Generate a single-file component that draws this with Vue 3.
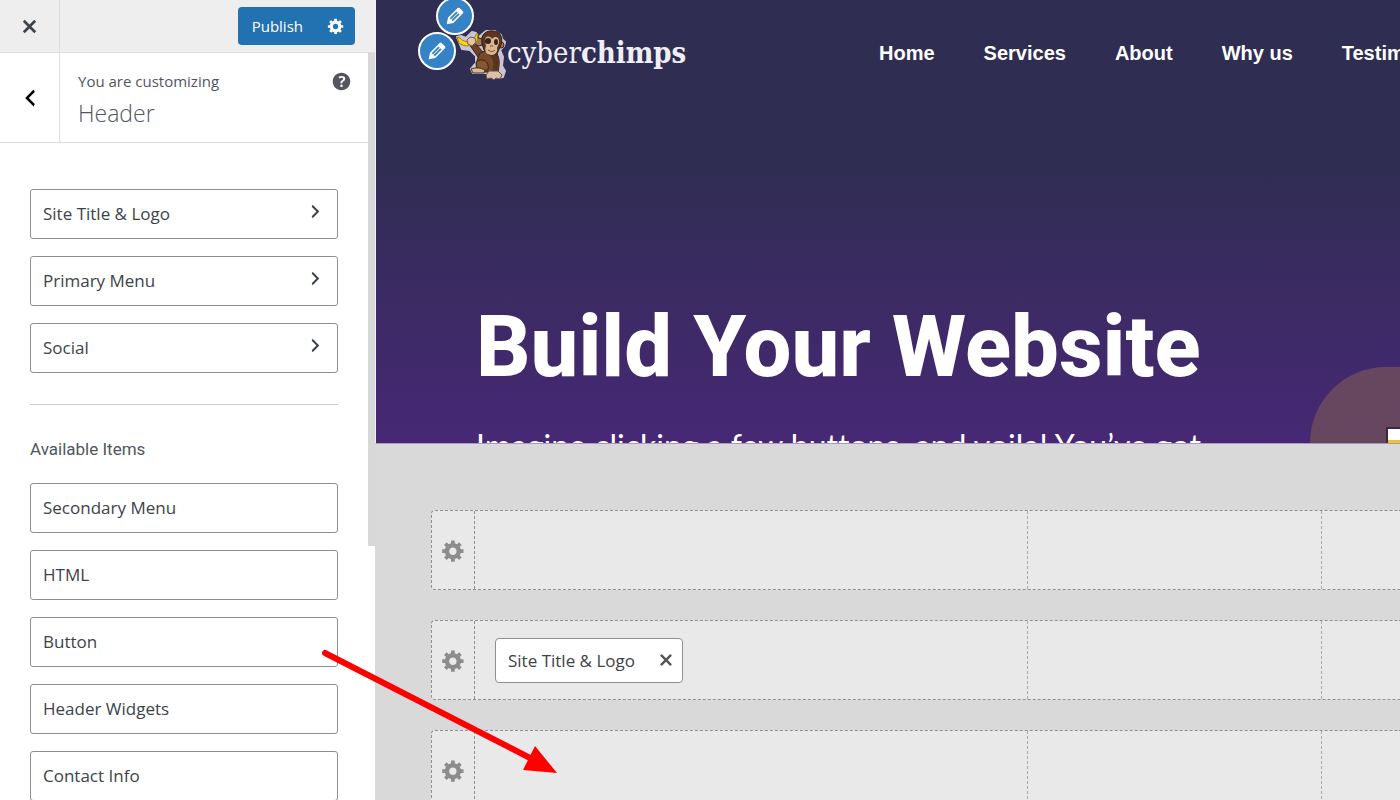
<template>
  <div class="customizer">
    <aside class="sidebar">
      <div class="topbar">
        <button class="btn-close" aria-label="Close">
          <svg viewBox="0 0 20 20" width="27" height="27"><path :d="icons.close" /></svg>
        </button>
        <div class="publish-group">
          <button class="btn-publish">Publish</button>
          <button class="btn-publish-settings" aria-label="Publish settings">
            <svg viewBox="0 0 20 20" width="18" height="18"><path :d="icons.gear" /></svg>
          </button>
        </div>
      </div>

      <div class="panel">
        <div class="panel-title">
          <button class="btn-back" aria-label="Back">
            <svg viewBox="0 0 20 20" width="24" height="24"><path :d="icons.left" /></svg>
          </button>
          <div class="panel-heading">
            <span class="panel-intro">You are customizing</span>
            <h3>Header</h3>
          </div>
          <button class="btn-help" aria-label="Help">
            <svg viewBox="0 0 20 20" width="25" height="25"><path :d="icons.help" /></svg>
          </button>
        </div>

        <div class="panel-content">
          <div class="item-list">
            <button v-for="item in usedItems" :key="item" class="item">
              <span>{{ item }}</span>
              <svg viewBox="0 0 20 20" width="19" height="19"><path :d="icons.right" /></svg>
            </button>
          </div>
          <hr />
          <h4>Available Items</h4>
          <div class="item-list">
            <button v-for="item in availableItems" :key="item" class="item">
              <span>{{ item }}</span>
            </button>
          </div>
        </div>
      </div>
      <div class="scroll-track"><div class="scroll-thumb"></div></div>
    </aside>

    <main class="main">
      <section class="preview">
        <header class="site-header">
          <a href="#" class="logo" aria-label="cyberchimps">
            <svg class="monkey" viewBox="0 0 52 52" width="52" height="52">
              <g stroke="#c9c3d6" stroke-width="2" stroke-linejoin="round" fill="#c9c3d6">
                <path d="M1 8l4-1 5 2 6-6 4 1-1 9 4 2 1-8 6-5h9l6 4 1 4 3 3-1 4-4 4 3 7-1 9 3 5-2 6-5 1-8-1-2-4H17l-2-4 5-6 0-7-6-6-8-1z" />
              </g>
              <!-- arms and body -->
              <path d="M13 15l5-2 9 10 6 2-3 8-8-5z" fill="#6b4225" stroke="#3c2416" />
              <path d="M24 24c8-4 17-3 18 3 2 5 1 11 0 16H22c-3-5-1-13 2-19z" fill="#754a2a" stroke="#3c2416" />
              <path d="M34 27c4 3 4 8 2 16h5c3-6 3-13 0-18z" fill="#5a351e" />
              <path d="M20 33c6-5 14-1 12 8l-11 1z" fill="#865633" stroke="#3c2416" />
              <path d="M15 40c5-2 10-1 14 1l-1 3H17z" fill="#d9b793" stroke="#4b3023" />
              <path d="M33 42h9l4 4-2 4-4-1-2 2-3-2-4 1-1-4z" fill="#dbc1aa" stroke="#6a4c3b" />
              <!-- head -->
              <circle cx="23" cy="13" r="4" fill="#a87952" stroke="#3c2416" />
              <circle cx="45" cy="16" r="3" fill="#a87952" stroke="#3c2416" />
              <path d="M26 15c-2-9 4-14 11-13 8 0 10 7 8 14l-4 9-8 1-5-5z" fill="#5b351f" stroke="#352015" />
              <path d="M29 11c0-5 6-4 7-1 3-4 8-2 7 4l-2 5c1 4-2 7-5 7-6 0-8-4-6-9z" fill="#dcb68c" />
              <ellipse cx="32" cy="12" rx="3" ry="3" fill="#332622" />
              <ellipse cx="40" cy="13" rx="2" ry="3" fill="#332622" />
              <path d="M34 17h3M32 21c3 2 5 2 7 0" fill="none" stroke="#7b523b" />
              <!-- banana -->
              <path d="M1 8l3 1c3 4 8 4 13 3l4-8 1 1-1 8c-5 5-13 5-18 1z" fill="#f5d51c" stroke="#a78019" />
              <path d="M11 11l3-3 5 1 1 4-4 4-4-2z" fill="#dfc6a6" stroke="#765643" />
            </svg>
            <span class="logo-text">cyber<b>chimps</b></span>
          </a>
          <button class="edit-shortcut edit-header" aria-label="Edit header">
            <svg viewBox="0 0 20 20" width="24" height="24"><path :d="icons.edit" /></svg>
          </button>
          <button class="edit-shortcut edit-logo" aria-label="Edit logo">
            <svg viewBox="0 0 20 20" width="24" height="24"><path :d="icons.edit" /></svg>
          </button>
          <nav class="site-nav">
            <a v-for="link in navLinks" :key="link" href="#">{{ link }}</a>
          </nav>
        </header>
        <div class="hero">
          <h1>Build Your Website</h1>
          <p>Imagine clicking a few buttons, and voila! You’ve got</p>
        </div>
        <div class="hero-art">
          <div class="hero-card"></div>
        </div>
      </section>

      <section class="builder">
        <div v-for="row in builderRows" :key="row.id" class="builder-row">
          <button class="row-settings" :aria-label="row.label">
            <svg viewBox="0 0 20 20" width="25" height="25"><path :d="icons.gear" /></svg>
          </button>
          <div class="drop-zone">
            <div v-for="chip in row.items" :key="chip" class="chip">
              <span>{{ chip }}</span>
              <button aria-label="Remove" @click="removeItem(row, chip)">
                <svg viewBox="0 0 20 20" width="24" height="24"><path :d="icons.close" /></svg>
              </button>
            </div>
          </div>
          <div class="drop-zone"></div>
          <div class="drop-zone"></div>
        </div>
      </section>
    </main>

    <!-- drag hint pointing from the Button item to the bottom row -->
    <svg class="drag-arrow" viewBox="0 0 240 130" width="240" height="130">
      <path d="M7 7L214 113" stroke="#ff0000" stroke-width="6" stroke-linecap="round" />
      <path d="M239 127L217 100L205 124z" fill="#ff0000" />
    </svg>
  </div>
</template>

<script setup>
import { ref } from 'vue'

const icons = {
  close: 'M14.95 6.46L11.41 10l3.54 3.54-1.41 1.41L10 11.42l-3.53 3.53-1.42-1.42L8.58 10 5.05 6.47l1.42-1.42L10 8.58l3.54-3.53z',
  gear: 'M18 12h-2.18c-.17.7-.44 1.35-.81 1.93l1.54 1.54-2.1 2.1-1.54-1.54c-.58.36-1.23.63-1.91.79V19H8v-2.18c-.68-.16-1.33-.43-1.91-.79l-1.54 1.54-2.12-2.12 1.54-1.54c-.36-.58-.63-1.23-.79-1.91H1V9.03h2.17c.16-.7.44-1.35.8-1.94L2.43 5.55l2.1-2.1 1.54 1.54c.58-.37 1.24-.64 1.93-.81V2h3v2.18c.68.16 1.33.43 1.91.79l1.54-1.54 2.12 2.12-1.54 1.54c.36.59.64 1.24.8 1.94H18V12zm-8.5 1.5c1.66 0 3-1.34 3-3s-1.34-3-3-3-3 1.34-3 3 1.34 3 3 3z',
  left: 'M14 5l-5 5 5 5-1 2-7-7 7-7z',
  right: 'M6 15l5-5-5-5 1-2 7 7-7 7z',
  help: 'M17 10c0-3.87-3.14-7-7-7-3.87 0-7 3.13-7 7s3.13 7 7 7c3.86 0 7-3.13 7-7zm-6.3 1.48H9.14v-.43c0-.38.08-.7.24-.98s.46-.57.88-.89c.41-.29.68-.53.81-.71.14-.18.2-.39.2-.62 0-.25-.09-.44-.28-.58-.19-.13-.45-.19-.79-.19-.58 0-1.25.15-2 .46l-.64-1.28c.87-.49 1.8-.74 2.77-.74.81 0 1.45.2 1.92.58.48.39.71.91.71 1.55 0 .43-.09.8-.29 1.11-.19.32-.57.67-1.11 1.06-.38.28-.61.49-.71.63-.1.15-.15.34-.15.57v.35zm-1.47 2.74c-.18-.17-.27-.42-.27-.73 0-.33.08-.58.26-.75s.43-.25.77-.25c.32 0 .57.09.75.26s.27.42.27.74c0 .3-.09.55-.27.72-.18.18-.43.27-.75.27-.33 0-.58-.09-.76-.26z',
  edit: 'M13.89 3.39l2.71 2.72c.46.46.42 1.24.03 1.64l-8.01 8.02-5.56 1.16 1.16-5.58s7.6-7.63 7.99-8.03c.39-.39 1.22-.39 1.68.07zm-2.73 2.79l-5.59 5.61 1.11 1.11 5.54-5.65zm-2.97 8.23l5.58-5.6-1.07-1.08-5.59 5.6z'
}

const usedItems = ['Site Title & Logo', 'Primary Menu', 'Social']
const availableItems = ['Secondary Menu', 'HTML', 'Button', 'Header Widgets', 'Contact Info']
const navLinks = ['Home', 'Services', 'About', 'Why us', 'Testimonials']

const builderRows = ref([
  { id: 'top', label: 'Top row settings', items: [] },
  { id: 'main', label: 'Main row settings', items: ['Site Title & Logo'] },
  { id: 'bottom', label: 'Bottom row settings', items: [] }
])

const removeItem = (row, chip) => {
  row.items = row.items.filter((item) => item !== chip)
}
</script>

<style>
body { margin: 0; }
</style>

<style scoped>
* { box-sizing: border-box; }
svg { display: block; fill: currentColor; }
button { font: inherit; color: inherit; margin: 0; padding: 0; border: none; background: none; cursor: pointer; }

.customizer { position: relative; display: flex; height: 100vh; overflow: hidden; font-family: "Open Sans", "Noto Sans", sans-serif; color: #3c434a; }

/* Sidebar */
.sidebar { display: grid; grid-template-columns: 1fr 7px; grid-template-rows: 53px minmax(0, 1fr); flex: none; width: 375px; background: #fff; }
.topbar { grid-column: 1 / 3; display: flex; justify-content: space-between; align-items: center; padding-right: 20px; background: #eee; border-bottom: 1px solid #ddd; }
.btn-close { display: flex; align-items: center; justify-content: center; width: 60px; height: 52px; border-right: 1px solid #ddd; }
.publish-group { display: flex; height: 38px; border-radius: 4px; overflow: hidden; background: #2271b1; color: #fff; font-size: 15px; }
.btn-publish { padding: 0 14px; }
.btn-publish-settings { padding: 0 10px; }
.panel { min-width: 0; overflow: hidden; }
.panel-title { display: flex; height: 90px; border-bottom: 1px solid #ddd; color: #50575e; }
.btn-back { display: flex; align-items: center; justify-content: center; width: 60px; border-right: 1px solid #ddd; color: #000; }
.panel-heading { flex: 1; padding: 16px 18px; }
.panel-intro { display: block; font-size: 15px; line-height: 24px; }
.panel-heading h3 { margin: 4px 0 0; font-size: 23px; line-height: 32px; font-weight: 300; }
.btn-help { align-self: flex-start; padding: 16px 14px; }
.panel-content { padding: 46px 30px 0; }
.item-list { display: grid; gap: 17px; }
.item { display: flex; justify-content: space-between; height: 50px; padding: 0 12px; border: 1px solid #8c8f94; border-radius: 3px; background: #fff; font-size: 17px; line-height: 48px; text-align: left; }
.item svg { margin-top: 12px; }
hr { margin: 31px 0 0; border: none; border-top: 1px solid #ccc; }
h4 { margin: 32px 0 21px; font-family: Roboto, sans-serif; font-size: 17px; line-height: 25px; font-weight: 400; color: #50575e; }
.scroll-thumb { height: 66%; background: #d7d9d9; }

/* Site preview */
.main { display: grid; grid-template-rows: minmax(0, 444fr) minmax(0, 356fr); flex: 1; min-width: 0; background: #d9d9d9; }
.preview { position: relative; overflow: hidden; border-left: 1px solid #f0f0f1; border-bottom: 1px solid #a69bb8; background: linear-gradient(#2f2d52 35%, #472875 100%); color: #fff; }
.site-header { position: relative; display: flex; justify-content: space-between; height: 106px; padding-left: 80px; }
.logo { display: flex; align-items: center; color: #f0eff5; text-decoration: none; }
.monkey { margin-top: 3px; }
.logo-text { margin-left: -1px; font-family: "DejaVu Serif Condensed", "DejaVu Serif", serif; font-stretch: condensed; font-size: 29px; }
.edit-shortcut { position: absolute; display: flex; align-items: center; justify-content: center; width: 38px; height: 38px; border: 2px solid #fff; border-radius: 50%; background: #3582c4; color: #fff; }
.edit-header { left: 60px; top: -3px; }
.edit-logo { left: 42px; top: 32px; }
.site-nav { display: flex; align-items: center; gap: 49px; flex: none; width: 521px; overflow: hidden; font-family: "Liberation Sans", Arial, sans-serif; font-size: 20px; font-weight: 600; white-space: nowrap; }
.site-nav a { color: #fff; text-decoration: none; }
.hero { padding: 190px 0 0 100px; white-space: nowrap; }
.hero h1 { margin: 0; font-family: Roboto, sans-serif; font-size: 85px; line-height: 102px; font-weight: 800; }
.hero p { margin: 28px 0 0; font-family: Lato, sans-serif; font-size: 32px; line-height: 40px; font-variant-ligatures: none; }
.hero-art { position: absolute; left: 934px; top: 367px; width: 220px; height: 220px; border-radius: 76px; background: #67475f; }
.hero-card { width: 100px; height: 100px; margin: 60px 0 0 76px; border: 2px solid #3a2745; background: linear-gradient(#fff 11px, #ecc22e 11px); }

/* Header builder */
.builder { display: grid; grid-auto-rows: 80px; gap: 30px; padding: 66px 0 0 56px; overflow: hidden; }
.builder-row { display: grid; grid-template-columns: 43px 553fr 294fr 78fr; border: 1px dashed #8f8f8f; border-right: none; border-radius: 4px 0 0 4px; background: #e9e9e9; }
.row-settings { display: flex; align-items: center; justify-content: center; border-right: 1px dashed #8f8f8f; color: #8c8c8c; }
.drop-zone { display: flex; align-items: center; padding: 0 20px; border-right: 1px dashed #a7aaad; }
.drop-zone:last-child { border-right: none; }
.chip { display: flex; align-items: center; gap: 19px; height: 45px; padding: 0 4px 0 12px; border: 1px solid #8c8f94; border-radius: 4px; background: #fff; font-size: 17px; white-space: nowrap; }
.chip button { color: #555; }

.drag-arrow { position: absolute; left: 318px; top: 646px; pointer-events: none; }
</style>
